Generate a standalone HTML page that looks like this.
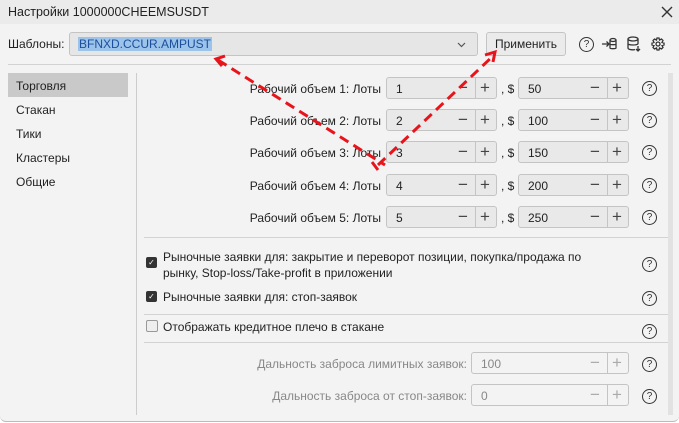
<!DOCTYPE html><html><head><meta charset="utf-8"><style>
body{margin:0;width:679px;height:423px;background:#fff;font-family:"Liberation Sans",sans-serif;font-size:12px;color:#222;overflow:hidden;position:relative}
.dlg{position:absolute;left:0;top:0;width:679px;height:421px;background:#f3f3f3;border-radius:0 0 6px 6px;border-bottom:1px solid #bbb}
.tb{position:absolute;left:0;top:0;width:679px;height:24px;background:#ebebeb}
.a{position:absolute;white-space:nowrap}
.inp{position:absolute;height:22px;border:1px solid #c4c4c4;border-radius:3px;background:#e9e9e9;box-sizing:border-box}
.inp span.v{position:absolute;left:9px;top:4px}
.pm{position:absolute;top:2px;font-size:17px;line-height:16px;color:#444}
.q{position:absolute;width:13px;height:13px;border:1.2px solid #333;border-radius:50%;font-size:10px;line-height:13px;text-align:center;color:#333}
.hr{position:absolute;height:1px;background:#d2d2d2}
.cb{position:absolute;width:11px;height:11px;border-radius:2px;background:#333;color:#fff;font-size:8px;line-height:11px;text-align:center}
</style></head><body>
<div class="dlg"></div>
<div class="tb"></div>
<div class="a" style="left:8px;top:5px;font-size:12.5px">Настройки 1000000CHEEMSUSDT</div>
<svg class="a" style="left:661px;top:6px" width="12" height="12"><path d="M1 1L11 11M11 1L1 11" stroke="#333" stroke-width="1.4"/></svg>
<div class="a" style="left:8px;top:37px">Шаблоны:</div>
<div class="inp" style="left:69px;top:32px;width:409px;height:24px;background:#e6e6e6"><span class="a" style="left:8px;top:4px;background:#9cc3ea;color:#1c4f9c;padding:0 1px">BFNXD.CCUR.AMPUST</span><svg class="a" style="left:387px;top:9px" width="9" height="6"><path d="M1 1L4.5 4.5L8 1" stroke="#555" fill="none" stroke-width="1.2"/></svg></div>
<div class="inp" style="left:486px;top:32px;width:80px;height:24px;background:#ebebeb;text-align:center;line-height:22px;color:#222">Применить</div>
<div class="q" style="left:579px;top:37px">?</div>
<svg class="a" style="left:601px;top:36px" width="16" height="16" fill="none" stroke="#333" stroke-width="1.3"><path d="M1 8H8M5.5 5.5L8 8L5.5 10.5"/><ellipse cx="12" cy="4" rx="3" ry="1.5"/><path d="M9 4V12C9 13 15 13 15 12V4M9 8C9 9 15 9 15 8"/></svg>
<svg class="a" style="left:626px;top:36px" width="16" height="16" fill="none" stroke="#333" stroke-width="1.3"><ellipse cx="7" cy="3" rx="5" ry="2"/><path d="M2 3V12C2 14 8 14 9 13.5M12 3V8M2 7.5C2 9.5 12 9.5 12 7.5M12 10V15M10 13L12 15L14 13"/></svg>
<svg class="a" style="left:651px;top:37px" width="14" height="14" fill="none" stroke="#333" stroke-width="1.3"><circle cx="7" cy="7" r="2"/><path d="M6 1H8L8.5 3L10.5 2L12 3.5L11 5.5L13 6V8L11 8.5L12 10.5L10.5 12L8.5 11L8 13H6L5.5 11L3.5 12L2 10.5L3 8.5L1 8V6L3 5.5L2 3.5L3.5 2L5.5 3Z"/></svg>
<div class="hr" style="left:8px;top:64px;width:663px"></div>
<div class="a" style="left:8px;top:73px;width:120px;height:24px;background:#c9c9c9"></div>
<div class="a" style="left:16px;top:79px">Торговля</div>
<div class="a" style="left:16px;top:103px">Стакан</div>
<div class="a" style="left:16px;top:127px">Тики</div>
<div class="a" style="left:16px;top:151px">Кластеры</div>
<div class="a" style="left:16px;top:175px">Общие</div>
<div class="a" style="left:136px;top:73px;width:1px;height:342px;background:#ccc"></div>
<div class="a" style="left:668px;top:73px;width:5px;height:342px;background:#e2e2e2"></div>

<div id="rows"></div>
<script>
var ys=[77,109,141,174,206],lv=[50,100,150,200,250],h='';
for(var i=0;i<5;i++){var y=ys[i];
h+='<div class="a" style="right:298px;top:'+(y+5)+'px">Рабочий объем '+(i+1)+': Лоты</div>';
h+='<div class="inp" style="left:386px;top:'+y+'px;width:111px"><span class="v">'+(i+1)+'</span><span class="pm" style="left:71px">−</span><span class="a" style="left:88px;top:0;height:20px;width:1px;background:#c4c4c4"></span><span class="pm" style="left:93px">+</span></div>';
h+='<div class="a" style="left:501px;top:'+(y+5)+'px">, $</div>';
h+='<div class="inp" style="left:518px;top:'+y+'px;width:111px"><span class="v">'+lv[i]+'</span><span class="pm" style="left:71px">−</span><span class="a" style="left:88px;top:0;height:20px;width:1px;background:#c4c4c4"></span><span class="pm" style="left:93px">+</span></div>';
h+='<div class="q" style="left:642px;top:'+(y+4)+'px">?</div>';}
document.getElementById('rows').innerHTML=h;
</script>
<div class="hr" style="left:144px;top:237px;width:524px"></div>
<div class="cb" style="left:146px;top:257px">✓</div>
<div class="a" style="left:163px;top:249px;line-height:16px">Рыночные заявки для: закрытие и переворот позиции, покупка/продажа по<br>рынку, Stop-loss/Take-profit в приложении</div>
<div class="q" style="left:642px;top:257px">?</div>
<div class="cb" style="left:146px;top:291px">✓</div>
<div class="a" style="left:163px;top:290px">Рыночные заявки для: стоп-заявок</div>
<div class="q" style="left:642px;top:291px">?</div>
<div class="hr" style="left:144px;top:314px;width:524px"></div>
<div class="a" style="left:146px;top:320px;width:10px;height:10px;border:1px solid #999;border-radius:2px;background:#eee"></div>
<div class="a" style="left:163px;top:320px">Отображать кредитное плечо в стакане</div>
<div class="q" style="left:642px;top:324px">?</div>
<div class="hr" style="left:144px;top:342px;width:524px"></div>
<div class="a" style="right:212px;top:357px;color:#888">Дальность заброса лимитных заявок:</div>
<div class="inp" style="left:471px;top:352px;width:158px;background:#f3f3f3"><span class="v" style="color:#888">100</span><span class="pm" style="left:118px;color:#aaa">−</span><span class="a" style="left:135px;top:0;height:20px;width:1px;background:#c4c4c4"></span><span class="pm" style="left:140px;color:#aaa">+</span></div>
<div class="q" style="left:642px;top:357px">?</div>
<div class="a" style="right:212px;top:389px;color:#888">Дальность заброса от стоп-заявок:</div>
<div class="inp" style="left:471px;top:384px;width:158px;background:#f3f3f3"><span class="v" style="color:#888">0</span><span class="pm" style="left:118px;color:#aaa">−</span><span class="a" style="left:135px;top:0;height:20px;width:1px;background:#c4c4c4"></span><span class="pm" style="left:140px;color:#aaa">+</span></div>
<div class="q" style="left:642px;top:389px">?</div>
<svg style="position:absolute;left:0;top:0" width="679" height="423">
<g stroke="#e8141c" stroke-width="3" fill="none" stroke-dasharray="10,6">
<line x1="218" y1="60" x2="385" y2="165"/><line x1="378" y1="165" x2="493" y2="56"/></g>
<g stroke="#e8141c" stroke-width="3" fill="none">
<polyline points="225,56 216,59 222,66"/><polyline points="485,55 495,52 493,62"/><line x1="372" y1="162" x2="378" y2="170"/></g>
</svg>
</body></html>
